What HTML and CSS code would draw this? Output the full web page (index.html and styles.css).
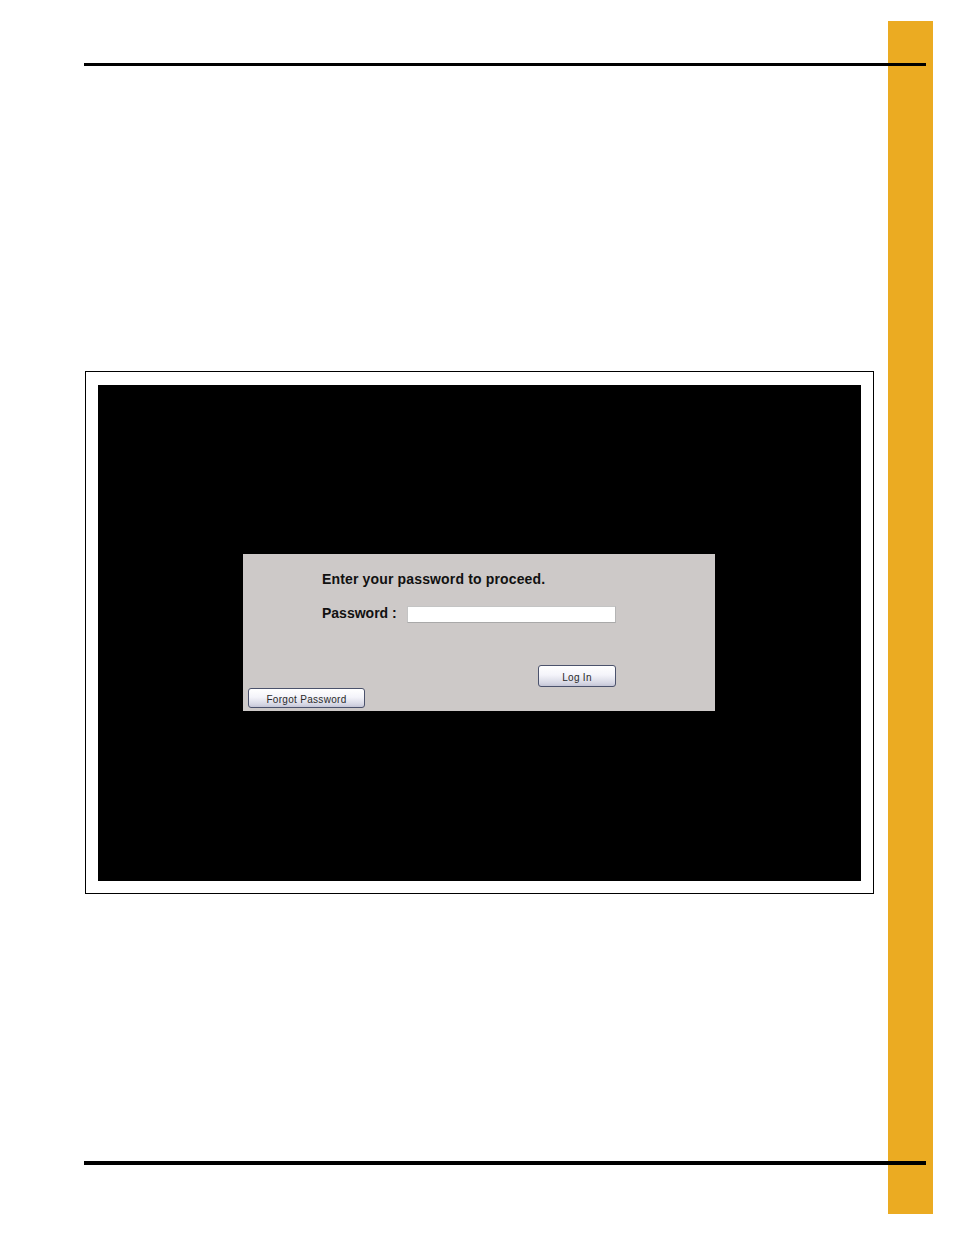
FILE: index.html
```html
<!DOCTYPE html>
<html lang="en">
<head>
<meta charset="utf-8">
<title>Password</title>
<link rel="stylesheet" href="styles.css">
</head>
<body>
<div class="page">
  <div class="tab"></div>
  <div class="rule rule-top"></div>
  <div class="frame">
    <div class="screen">
      <div class="dialog">
        <div class="content">
          <div class="title">Enter your password to proceed.</div>
          <div class="row">
            <label class="label" for="pw">Password :</label>
            <input class="input" id="pw" type="password">
          </div>
          <div class="actions">
            <button class="btn btn-login" type="button">Log In</button>
          </div>
        </div>
        <button class="btn btn-forgot" type="button">Forgot Password</button>
      </div>
    </div>
  </div>
  <div class="rule rule-bottom"></div>
</div>
</body>
</html>
```
FILE: styles.css
```css
html, body {
  margin: 0;
  padding: 0;
  background: #ffffff;
}

.page {
  position: relative;
  width: 954px;
  height: 1235px;
  overflow: hidden;
  font-family: "Liberation Sans", Arial, sans-serif;
  display: flex;
  flex-direction: column;
}

.tab {
  position: absolute;
  left: 888px;
  top: 21px;
  width: 45px;
  height: 1193px;
  background: #ebab22;
}

.rule {
  position: relative;
  z-index: 1;
  margin-left: 84px;
  width: 842px;
  background: #000000;
}

.rule-top {
  margin-top: 63px;
  height: 3px;
}

.rule-bottom {
  margin-top: 267px;
  height: 4px;
}

.frame {
  margin-top: 305px;
  margin-left: 85px;
  width: 763px;
  height: 496px;
  padding: 13px 12px 12px 12px;
  border: 1px solid #000000;
}

.screen {
  box-sizing: border-box;
  width: 763px;
  height: 496px;
  padding: 169px 0 0 145px;
  background: #000000;
  display: flex;
  align-items: flex-start;
}

.dialog {
  width: 472px;
  height: 157px;
  box-sizing: border-box;
  padding-top: 17px;
  background: #cdc9c8;
  display: flex;
  flex-direction: column;
}

.content {
  margin-left: 79px;
  width: 294px;
  display: flex;
  flex-direction: column;
}

.title {
  font-size: 14px;
  line-height: 16px;
  font-weight: bold;
  letter-spacing: 0.15px;
  color: #111111;
  white-space: nowrap;
}

.row {
  margin-top: 19px;
  display: flex;
  align-items: flex-start;
}

.label {
  font-size: 14px;
  line-height: 15px;
  font-weight: bold;
  color: #111111;
  width: 75px;
  margin-right: 10px;
  white-space: nowrap;
}

.input {
  box-sizing: border-box;
  width: 209px;
  height: 17px;
  margin: 0;
  padding: 0;
  background: #ffffff;
  border: 1px solid #c4c4c4;
  border-bottom-color: #a9a9a9;
  border-right-color: #b5b5b5;
  outline: none;
}

.actions {
  margin-top: 42px;
  display: flex;
  justify-content: flex-end;
}

.btn {
  box-sizing: border-box;
  margin: 0;
  padding: 2px 0 0 0;
  border: 1px solid #4b526c;
  border-radius: 3px;
  background: linear-gradient(#ffffff 0%, #f4f4fa 45%, #d6d7e4 85%, #c4c5d6 100%);
  font-family: "Liberation Sans", Arial, sans-serif;
  font-size: 10px;
  letter-spacing: 0.3px;
  color: #2a2a2a;
  text-align: center;
}

.btn-login {
  width: 78px;
  height: 22px;
}

.btn-forgot {
  margin-top: 1px;
  margin-left: 5px;
  width: 117px;
  height: 20px;
}
```
